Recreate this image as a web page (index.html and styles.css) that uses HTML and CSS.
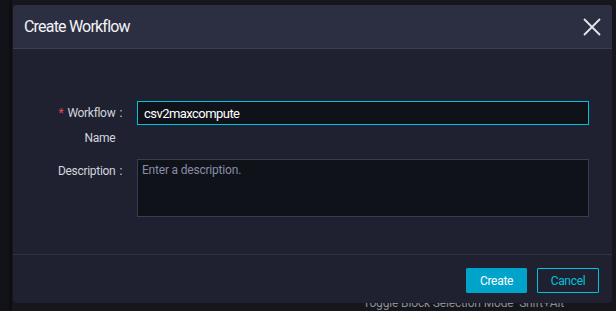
FILE: index.html
```html
<!DOCTYPE html>
<html lang="en">
  <head>
    <meta charset="UTF-8" />
    <title>Create Workflow</title>
    <link rel="stylesheet" href="styles.css">
  </head>
  <body>
    <div class="page">
      <div class="rail"></div>
      <div class="backdrop">
        <div class="hint">Toggle Block Selection Mode&nbsp;&nbsp;Shift+Alt</div>
      </div>
    </div>

    <div class="modal">
      <div class="modal-header">
        <h2>Create Workflow</h2>
        <button class="close" aria-label="Close">
          <svg width="18" height="18" viewBox="0 0 18 18">
            <path d="M1 1 L17 17 M17 1 L1 17" stroke="#e3e7f0" stroke-width="1.8" fill="none" />
          </svg>
        </button>
      </div>
      <div class="modal-body">
        <div class="row">
          <label class="label"><span class="req">*</span><span class="label-text">Workflow<br />Name</span><span class="colon">:</span></label>
          <input class="field focus" type="text" value="csv2maxcompute" />
        </div>
        <div class="row">
          <label class="label"><span class="label-text">Description</span><span class="colon">:</span></label>
          <textarea class="field area" placeholder="Enter a description."></textarea>
        </div>
      </div>
      <div class="modal-footer">
        <button class="btn primary">Create</button>
        <button class="btn outline">Cancel</button>
      </div>
    </div>
  </body>
</html>
```

FILE: styles.css
```css
body {
  margin: 0;
  height: 311px;
  overflow: hidden;
  background-color: #16171d;
  font-family: Roboto, "Liberation Sans", sans-serif;
}
.page {
  display: flex;
  height: 311px;
}
.rail {
  width: 9px;
  background-color: #121319;
  border-right: 3px solid #0d0e12;
}
.backdrop {
  flex: 1;
  padding-top: 296px;
}
.hint {
  margin-left: 351px;
  font-size: 12px;
  letter-spacing: -0.15px;
  color: #8b8e98;
}
.modal {
  position: absolute;
  top: 5px;
  left: 13px;
  width: 599px;
  height: 298px;
  display: flex;
  flex-direction: column;
  background-color: #1f2130;
  border-radius: 4px;
  overflow: hidden;
}
.modal-header {
  height: 43px;
  display: flex;
  align-items: center;
  justify-content: space-between;
  padding: 0 11px 0 11px;
  background-color: #2c2f41;
  border-bottom: 1px solid #3b3e52;
}
.modal-header h2 {
  margin: 0;
  font-size: 16px;
  font-weight: 400;
  letter-spacing: -0.8px;
  color: #f2f4f8;
}
.close {
  background: none;
  border: none;
  padding: 0;
  width: 18px;
  height: 18px;
  cursor: pointer;
}
.close svg {
  display: block;
}
.modal-body {
  flex: 1;
  padding: 52px 23px 0 0;
}
.row {
  display: grid;
  grid-template-columns: 124px 1fr;
  margin-bottom: 8px;
}
.label {
  display: flex;
  justify-content: flex-end;
  padding-right: 15px;
  font-size: 12px;
  line-height: 25px;
  letter-spacing: -0.3px;
  color: #d2d5de;
}
.label-text {
  text-align: right;
}
.req {
  color: #e8464a;
  margin-right: 4px;
}
.colon {
  margin-left: 4px;
}
.field {
  box-sizing: border-box;
  width: 100%;
  background-color: #10121a;
  border: 1px solid #3a3c52;
  color: #ffffff;
  font-family: Roboto, "Liberation Sans", sans-serif;
  font-size: 13px;
  padding: 0 6px;
  outline: none;
}
.focus {
  height: 24px;
  letter-spacing: -0.55px;
  border-color: #00c1de;
}
.area {
  height: 58px;
  resize: none;
  padding: 3px 4px 0;
  font-size: 12px;
  letter-spacing: -0.2px;
}
.area::placeholder {
  color: #878ca6;
}
.modal-footer {
  display: flex;
  justify-content: flex-end;
  gap: 10px;
  padding: 13px 13px 10px 0;
  border-top: 1px solid #2f3246;
}
.btn {
  height: 25px;
  font-family: Roboto, "Liberation Sans", sans-serif;
  font-size: 12px;
  letter-spacing: -0.3px;
  cursor: pointer;
  border-radius: 1px;
}
.primary {
  width: 61px;
  background-color: #00a3ca;
  border: 1px solid #00a3ca;
  color: #ffffff;
}
.outline {
  width: 62px;
  background-color: transparent;
  border: 1px solid #00c1de;
  color: #00c1de;
}
```
